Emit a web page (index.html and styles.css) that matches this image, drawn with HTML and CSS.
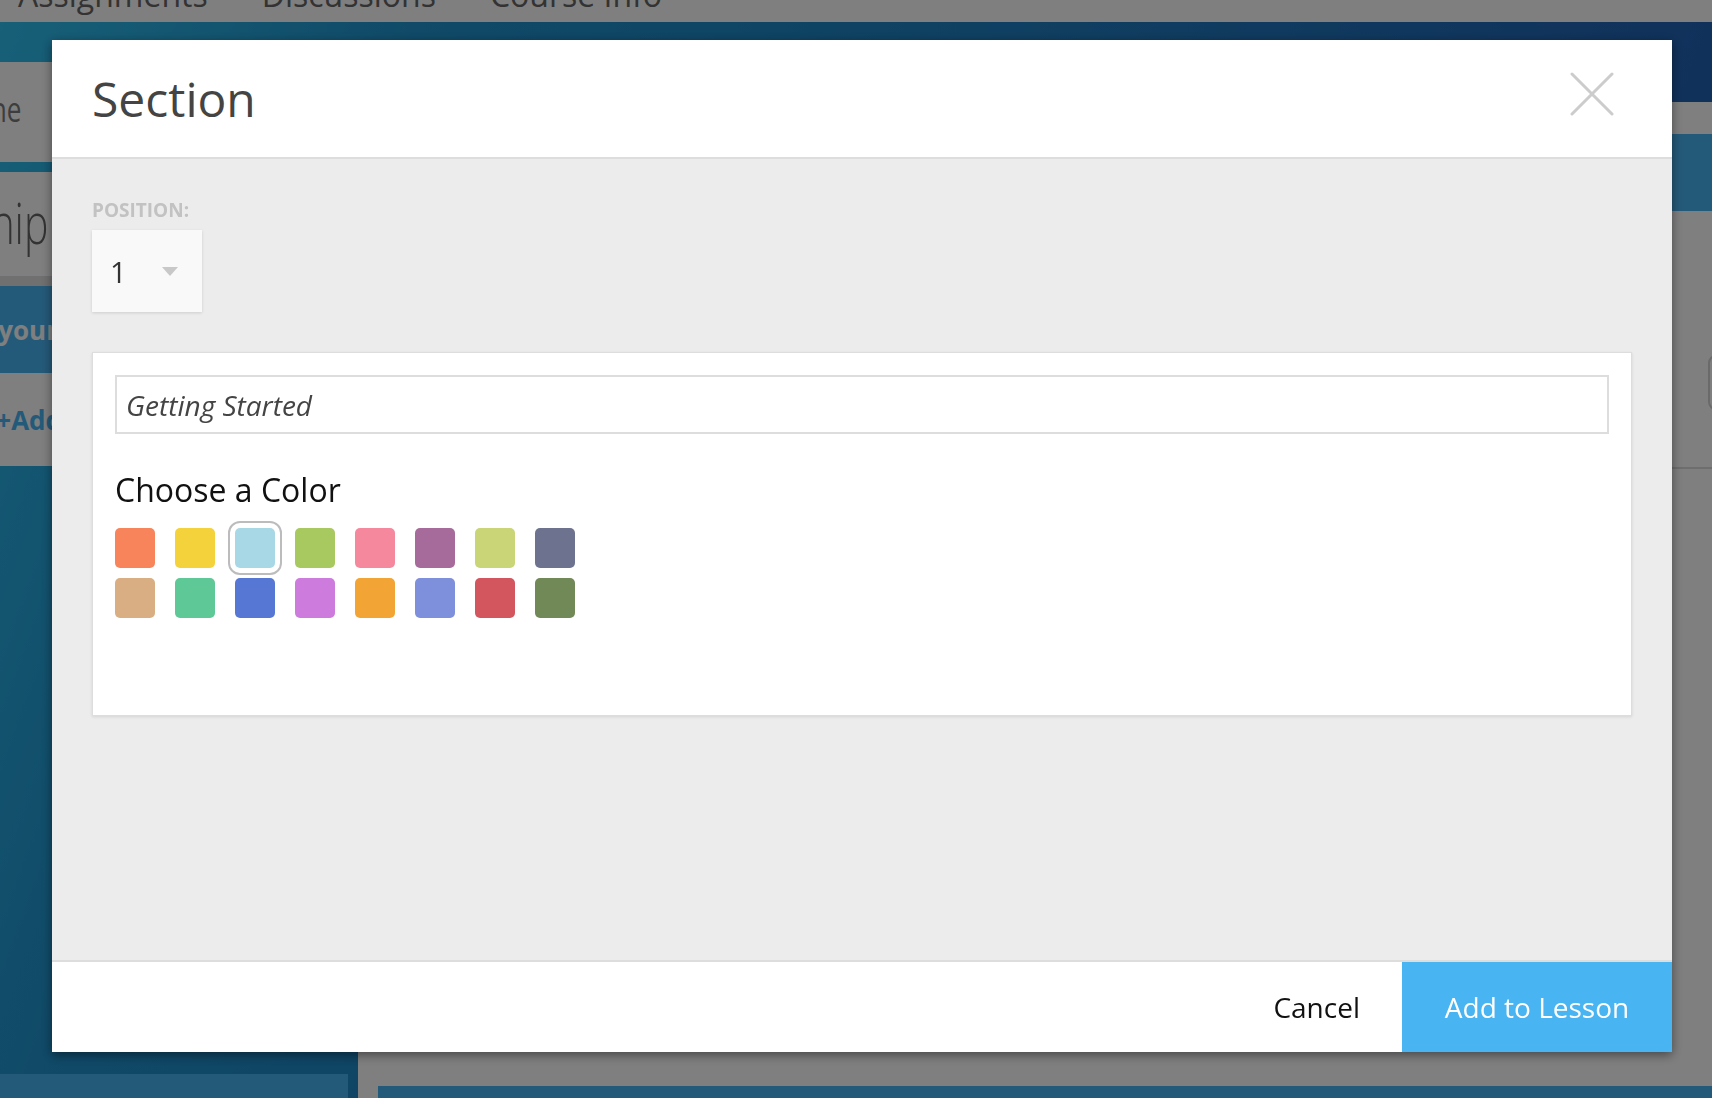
FILE: index.html
```html
<!DOCTYPE html>
<html lang="en">
<head>
<meta charset="utf-8">
<title>Section</title>
<link rel="stylesheet" href="styles.css">
</head>
<body>
<div class="page">
  <nav class="topnav">
    <span class="topnav-item">Assignments</span>
    <span class="topnav-item">Discussions</span>
    <span class="topnav-item">Course Info</span>
  </nav>
  <div class="shell">
    <aside class="sidebar">
      <div class="side-card side-card-1"><span class="side-label label-1"><span class="condensed">Outline</span></span></div>
      <div class="side-group">
        <div class="side-card side-card-2"><span class="side-label label-2"><span class="condensed condensed-lg">Relationship</span></span></div>
        <div class="side-strip"></div>
        <div class="side-card side-card-3"><span class="side-label label-3"><span>Customize your</span></span></div>
        <div class="side-card side-card-4"><span class="side-label label-4"><span>+Add</span></span></div>
      </div>
      <div class="side-spacer"></div>
      <div class="side-bottom"></div>
    </aside>
    <main class="main">
      <div class="main-top"></div>
      <div class="main-banner"></div>
      <div class="main-section">
        <div class="main-button"></div>
      </div>
      <div class="main-lower"></div>
      <div class="main-bar"></div>
    </main>
  </div>
</div>

<div class="overlay">
  <div class="modal">
    <header class="modal-header">
      <h1 class="modal-title">Section</h1>
      <button class="modal-close" aria-label="Close">
        <svg width="44" height="44" viewBox="0 0 44 44">
          <path d="M2 2 L42 42 M42 2 L2 42" stroke="#cccccc" stroke-width="3" stroke-linecap="round" fill="none"/>
        </svg>
      </button>
    </header>
    <div class="modal-body">
      <div class="field-label">POSITION:</div>
      <div class="select">
        <span class="select-value">1</span>
        <span class="select-arrow"></span>
      </div>
      <div class="card">
        <div class="text-input">Getting Started</div>
        <h2 class="color-heading">Choose a Color</h2>
        <div class="swatches">
          <span class="swatch sw-1"></span>
          <span class="swatch sw-2"></span>
          <span class="swatch sw-3 selected"></span>
          <span class="swatch sw-4"></span>
          <span class="swatch sw-5"></span>
          <span class="swatch sw-6"></span>
          <span class="swatch sw-7"></span>
          <span class="swatch sw-8"></span>
          <span class="swatch sw-9"></span>
          <span class="swatch sw-10"></span>
          <span class="swatch sw-11"></span>
          <span class="swatch sw-12"></span>
          <span class="swatch sw-13"></span>
          <span class="swatch sw-14"></span>
          <span class="swatch sw-15"></span>
          <span class="swatch sw-16"></span>
        </div>
      </div>
    </div>
    <footer class="modal-footer">
      <button class="btn-cancel">Cancel</button>
      <button class="btn-primary">Add to Lesson</button>
    </footer>
  </div>
</div>
</body>
</html>
```
FILE: styles.css
```css
* { box-sizing: border-box; }

html, body {
  margin: 0;
  padding: 0;
  width: 1712px;
  height: 1098px;
  overflow: hidden;
  font-family: "Open Sans", "DejaVu Sans", sans-serif;
}

/* ---------- backdrop page ---------- */
.page {
  width: 1712px;
  height: 1098px;
  display: flex;
  flex-direction: column;
  overflow: hidden;
}

.topnav {
  height: 22px;
  flex: none;
  background: #ffffff;
  display: flex;
  align-items: flex-start;
  gap: 54px;
  padding-left: 18px;
  overflow: hidden;
}

.topnav-item {
  font-size: 32px;
  line-height: 32px;
  margin-top: -21px;
  color: #666666;
  white-space: nowrap;
}

.shell {
  flex: 1;
  display: flex;
  background: linear-gradient(110deg, #2ec0f0 0%, #2094d0 20%, #1e8aca 35%, #2260b4 85%);
  overflow: hidden;
}

.sidebar {
  width: 358px;
  flex: none;
  display: flex;
  flex-direction: column;
  padding: 40px 10px 0 0;
  gap: 10px;
}

.side-group {
  display: flex;
  flex-direction: column;
}

.side-card {
  display: flex;
  align-items: center;
  background: #ffffff;
  overflow: hidden;
  flex: none;
}

.side-card-1 { height: 100px; padding-bottom: 6px; }
.side-card-2 { height: 104px; padding-bottom: 4px; }
.side-card-3 { height: 87px; background: #49b4f2; }
.side-card-4 { height: 93px; }

.side-strip {
  height: 10px;
  background: #e0e0e0;
}

.side-label {
  display: flex;
  justify-content: flex-end;
  white-space: nowrap;
  flex: none;
}

.label-1 { width: 22px; font-size: 34px; color: #7a7a7a; }
.label-2 { width: 48px; font-size: 57px; font-weight: 300; color: #666666; }
.label-3 { width: 58px; font-size: 26px; font-weight: 700; color: #ffffff; }
.label-4 { width: 62px; font-size: 26px; font-weight: 700; color: #49b4f2; }

.condensed {
  display: inline-block;
  transform: scaleX(0.77);
  transform-origin: right center;
}

.condensed-lg {
  transform: scaleX(0.72);
}

.side-spacer { flex: 1; }

.side-bottom {
  height: 24px;
  flex: none;
  background: #49b4f2;
  margin-top: -10px;
}

.main {
  flex: 1;
  margin-top: 80px;
  background: #ffffff;
  display: flex;
  flex-direction: column;
  overflow: hidden;
}

.main > * { flex-shrink: 0; }

.main-top { height: 32px; }

.main-banner {
  height: 77px;
  background: #49b4f2;
}

.main-section {
  height: 258px;
  border-bottom: 2px solid #dcdcdc;
  display: flex;
  justify-content: flex-end;
  align-items: flex-start;
  padding-top: 144px;
}

.main-button {
  width: 60px;
  height: 55px;
  border: 2px solid #d4d4d4;
  border-radius: 8px;
  margin-right: -56px;
}

.main-lower { height: 617px; }

.main-bar {
  height: 40px;
  margin-left: 20px;
  background: #49b4f2;
}

/* ---------- overlay + modal ---------- */
.overlay {
  position: fixed;
  inset: 0;
  background: rgba(0, 0, 0, 0.5);
  padding: 40px 0 0 52px;
}

.modal {
  width: 1620px;
  height: 1012px;
  background: #ececec;
  display: flex;
  flex-direction: column;
  box-shadow: 0 3px 10px rgba(0, 0, 0, 0.45);
}

.modal-header {
  flex: none;
  height: 119px;
  background: #ffffff;
  border-bottom: 2px solid #dddddd;
  display: flex;
  align-items: center;
  justify-content: space-between;
  padding: 0 58px 0 40px;
}

.modal-title {
  margin: 0;
  font-size: 48px;
  line-height: 65px;
  font-weight: 400;
  color: #444444;
}

.modal-close {
  align-self: flex-start;
  margin-top: 32px;
  width: 44px;
  height: 44px;
  padding: 0;
  border: 0;
  background: transparent;
  display: block;
}

.modal-close svg { display: block; }

.modal-body {
  flex: 1;
  padding: 38px 40px 0;
}

.field-label {
  font-size: 19px;
  line-height: 26px;
  font-weight: 700;
  color: #c2c2c2;
}

.select {
  margin-top: 7px;
  width: 110px;
  height: 82px;
  background: #f9f9f9;
  box-shadow: 0 1px 3px rgba(0, 0, 0, 0.13);
  display: flex;
  align-items: center;
  justify-content: space-between;
  padding: 0 24px 0 18px;
}

.select-value {
  font-size: 29px;
  color: #333333;
}

.select-arrow {
  width: 0;
  height: 0;
  border-left: 8px solid transparent;
  border-right: 8px solid transparent;
  border-top: 9px solid #c8c8c8;
}

.card {
  margin-top: 40px;
  height: 364px;
  background: #ffffff;
  border: 1px solid #dddddd;
  box-shadow: 0 1px 3px rgba(0, 0, 0, 0.1);
  padding: 22px;
}

.text-input {
  height: 59px;
  border: 2px solid #dddddd;
  padding: 0 9px;
  display: flex;
  align-items: center;
  font-size: 28px;
  font-style: italic;
  color: #444444;
}

.color-heading {
  margin: 34px 0 0;
  font-size: 32px;
  line-height: 44px;
  font-weight: 400;
  color: #111111;
}

.swatches {
  margin-top: 16px;
  display: grid;
  grid-template-columns: repeat(8, 40px);
  column-gap: 20px;
  row-gap: 10px;
}

.swatch {
  width: 40px;
  height: 40px;
  border-radius: 5px;
  display: block;
}

.swatch.selected {
  outline: 2px solid #bcbcbc;
  outline-offset: 5px;
}

.sw-1 { background: #f7845a; }
.sw-2 { background: #f4d23c; }
.sw-3 { background: #a8d8e6; }
.sw-4 { background: #a8c960; }
.sw-5 { background: #f6889e; }
.sw-6 { background: #a66b9b; }
.sw-7 { background: #c9d576; }
.sw-8 { background: #6d728f; }
.sw-9 { background: #d8ae82; }
.sw-10 { background: #5ec896; }
.sw-11 { background: #5678d4; }
.sw-12 { background: #cd7bdd; }
.sw-13 { background: #f2a534; }
.sw-14 { background: #7e8fdc; }
.sw-15 { background: #d3555e; }
.sw-16 { background: #718857; }

.modal-footer {
  flex: none;
  height: 92px;
  background: #ffffff;
  border-top: 2px solid #dddddd;
  display: flex;
  justify-content: flex-end;
}

.btn-cancel,
.btn-primary {
  font-family: "Open Sans", "DejaVu Sans", sans-serif;
  font-size: 28px;
  border: 0;
  margin: 0;
  cursor: pointer;
}

.btn-cancel {
  background: transparent;
  color: #111111;
  padding: 0 42px;
}

.btn-primary {
  width: 270px;
  background: #49b4f2;
  color: #ffffff;
  padding: 0;
}
```
